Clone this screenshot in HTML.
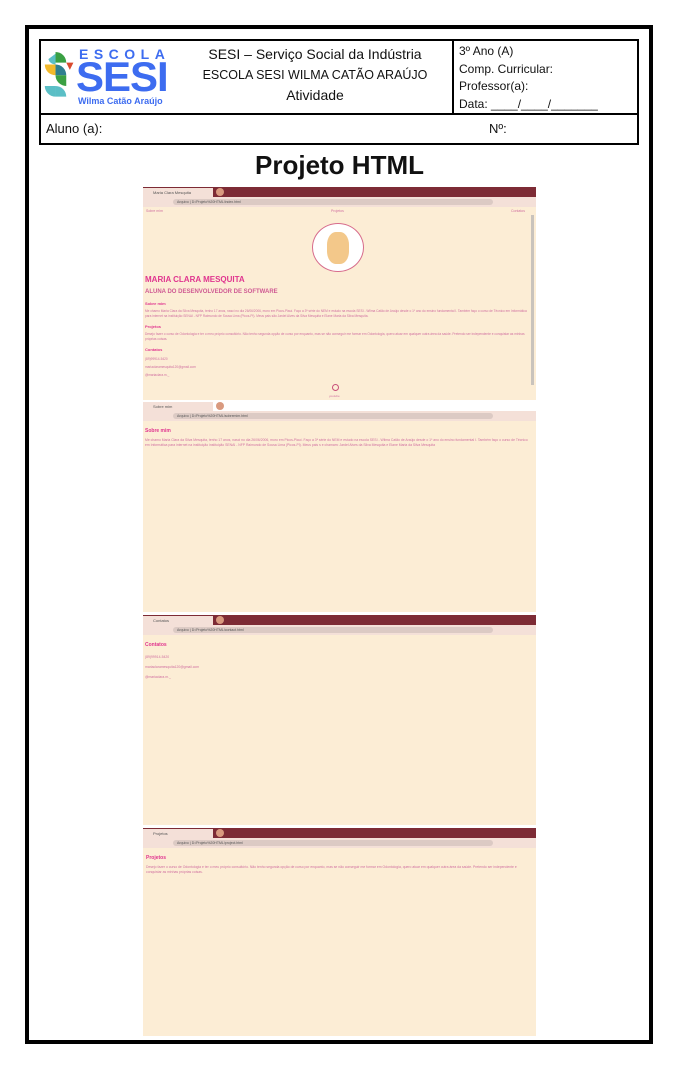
<!DOCTYPE html>
<html><head><meta charset="utf-8"><style>
*{margin:0;padding:0;box-sizing:border-box}
body{width:679px;height:1067px;background:#fff;position:relative;font-family:"Liberation Sans",sans-serif;overflow:hidden}
.abs{position:absolute}
.outer{left:25px;top:25px;width:628px;height:1019px;border:4px solid #000}
.hdr{left:39px;top:39px;width:600px;height:106px;border:2px solid #000}
.f{font-family:"Liberation Sans",sans-serif;color:#111}
.shot{position:absolute;left:143px;width:393px;background:#fcedd5;overflow:hidden}
.tabs{height:10px;background:#7d2b35;position:relative}
.tab{position:absolute;left:0;top:1px;width:70px;height:9px;background:#f4e0d8;font-size:4px;color:#555;padding:2px 0 0 10px}
.url{height:10px;background:#f4e0d8;position:relative}
.urlbox{position:absolute;left:30px;top:2px;width:320px;height:6px;background:#dccac4;border-radius:3px;font-size:3.5px;color:#555;padding:1px 0 0 4px}
.p{color:#d070a0;font-size:4px;line-height:5px}
.h{color:#e0358f;font-weight:bold}
</style></head><body>
<div class="abs outer"></div>
<div class="abs hdr"></div>
<div class="abs" style="left:39px;top:113px;width:600px;height:2px;background:#000"></div>
<div class="abs" style="left:452px;top:39px;width:2px;height:75px;background:#000"></div>
<!-- logo -->
<svg class="abs" style="left:43px;top:47px" width="34" height="60" viewBox="0 0 38 60">
<path d="M14 2 A12 12 0 0 1 26 14 L14 14Z" fill="#3aa043"/>
<path d="M26 14 L34 14 L30 22Z" fill="#d94a2e"/>
<path d="M2 16 L14 16 L14 28 A12 12 0 0 1 2 16Z" fill="#f2b92b"/>
<path d="M14 16 A12 12 0 0 1 26 28 L14 28Z" fill="#2f7f8f"/>
<path d="M14 28 A12 12 0 0 0 26 40 L26 28Z" fill="#3aa043"/>
<path d="M2 40 L14 40 L14 52 A12 12 0 0 1 2 40Z" fill="#5bbfc6"/>
<path d="M14 40 A12 12 0 0 1 26 52 L14 52Z" fill="#5bbfc6"/>
<path d="M14 4 L14 16 A8 8 0 0 1 6 10Z" fill="#5bbfc6"/>
</svg>
<div class="abs" style="left:79px;top:46px;font-size:14px;font-weight:bold;color:#3d6cf0;letter-spacing:5.5px">ESCOLA</div>
<div class="abs" style="left:76px;top:57px;font-size:42px;font-weight:bold;color:#3d6cf0;letter-spacing:-1px;line-height:40px">SESI</div>
<div class="abs" style="left:78px;top:96px;font-size:9px;font-weight:bold;color:#3d6cf0">Wilma Catão Araújo</div>
<div class="abs f" style="left:190px;top:44px;width:250px;text-align:center;font-size:14px;line-height:20px">SESI – Serviço Social da Indústria<br><span style="font-size:12.5px">ESCOLA SESI WILMA CATÃO ARAÚJO</span><br>Atividade</div>
<div class="abs f" style="left:459px;top:43px;font-size:12px;line-height:17.5px">3º Ano (A)<br>Comp. Curricular:<br>Professor(a):<br>Data: ____/____/_______</div>
<div class="abs f" style="left:46px;top:121px;font-size:13px">Aluno (a):</div>
<div class="abs f" style="left:489px;top:121px;font-size:13px">Nº:</div>
<div class="abs" style="left:0;width:679px;top:150px;text-align:center;font-size:26px;font-weight:bold;color:#111">Projeto HTML</div>

<!-- shot 1 -->
<div class="shot" style="top:187px;height:213px">
<div class="tabs"><div class="tab">Maria Clara Mesquita</div><div class="abs" style="left:73px;top:1px;width:8px;height:8px;border-radius:50%;background:#d99a7f"></div></div>
<div class="url"><div class="urlbox">Arquivo | D:/Projeto%20HTML/index.html</div></div>
<div class="p abs" style="left:3px;top:22px;font-size:3.5px">Sobre mim</div><div class="p abs" style="left:188px;top:22px;font-size:3.5px">Projetos</div><div class="p abs" style="left:368px;top:22px;font-size:3.5px">Contatos</div>
<div class="abs" style="left:388px;top:28px;width:3px;height:170px;background:#c9c3bc"></div>
<div class="abs" style="left:169px;top:36px;width:52px;height:49px;border-radius:50%;border:1.5px solid #d76c8c;background:#fff"><div style="margin:8px auto;width:22px;height:32px;background:#f3c88a;border-radius:40%"></div></div>
<div class="abs h" style="left:2px;top:88px;font-size:8px">MARIA CLARA MESQUITA</div>
<div class="abs" style="left:2px;top:102px;font-size:6px;color:#cf5a93;font-weight:bold">ALUNA DO DESENVOLVEDOR DE SOFTWARE</div>
<div class="abs h" style="left:2px;top:114px;font-size:4px">Sobre mim</div>
<div class="abs p" style="left:2px;top:122px;width:384px;font-size:3.2px;line-height:5px">Me chamo Maria Clara da Silva Mesquita, tenho 17 anos, nasci no dia 26/06/2006, moro em Picos-Piauí. Faço a 3ª série do NEM e estudo na escola SESI - Wilma Catão de Araújo desde o 1º ano do ensino fundamental I. Também faço o curso de Técnico em Informática para internet na instituição SENAI - NFP Raimundo de Sousa Lima (Picos-PI). Meus pais são Jardel Alves da Silva Mesquita e Elane Maria da Silva Mesquita.</div>
<div class="abs h" style="left:2px;top:137px;font-size:4px">Projetos</div>
<div class="abs p" style="left:2px;top:145px;width:384px;font-size:3.2px">Desejo fazer o curso de Odontologia e ter o meu próprio consultório. Não tenho segunda opção de curso por enquanto, mas se não conseguir me formar em Odontologia, quero atuar em qualquer outra área da saúde. Pretendo ser independente e conquistar as minhas próprias coisas.</div>
<div class="abs h" style="left:2px;top:160px;font-size:4px">Contatos</div>
<div class="abs p" style="left:2px;top:168px;font-size:3.2px;line-height:8px">(89)99914-5420<br>mariaclaramesquita120@gmail.com<br>@mariaclara.m._</div>
<div class="abs" style="left:189px;top:197px;width:7px;height:7px;border-radius:50%;border:1.5px solid #c8507a"></div>
<div class="abs p" style="left:186px;top:207px;font-size:3px">youtube</div>
</div>

<!-- shot 2 -->
<div class="shot" style="top:401px;height:211px">
<div class="tabs" style="background:#fff"><div class="tab" style="background:#f4e0d8">Sobre mim</div><div class="abs" style="left:73px;top:1px;width:8px;height:8px;border-radius:50%;background:#d99a7f"></div></div>
<div class="url"><div class="urlbox">Arquivo | D:/Projeto%20HTML/sobremim.html</div></div>
<div class="abs h" style="left:2px;top:27px;font-size:5px">Sobre mim</div>
<div class="abs p" style="left:2px;top:37px;width:388px;font-size:3.4px">Me chamo Maria Clara da Silva Mesquita, tenho 17 anos, nasci no dia 26/06/2006, moro em Picos-Piauí. Faço a 3ª série do NEM e estudo na escola SESI - Wilma Catão de Araújo desde o 1º ano do ensino fundamental I. Também faço o curso de Técnico em Informática para internet na instituição instituição SENAI - NFP Raimundo de Sousa Lima (Picos-PI). Meus pais s e chamam: Jardel Alves da Silva Mesquita e Elane Maria da Silva Mesquita</div>
</div>

<!-- shot 3 -->
<div class="shot" style="top:615px;height:210px">
<div class="tabs"><div class="tab">Contatos</div><div class="abs" style="left:73px;top:1px;width:8px;height:8px;border-radius:50%;background:#d99a7f"></div></div>
<div class="url"><div class="urlbox">Arquivo | D:/Projeto%20HTML/contact.html</div></div>
<div class="abs h" style="left:2px;top:27px;font-size:5px">Contatos</div>
<div class="abs p" style="left:2px;top:37px;font-size:3.4px;line-height:10px">(89)99914-5420<br>mariaclaramesquita120@gmail.com<br>@mariaclara.m._</div>
</div>

<!-- shot 4 -->
<div class="shot" style="top:828px;height:208px">
<div class="tabs"><div class="tab">Projetos</div><div class="abs" style="left:73px;top:1px;width:8px;height:8px;border-radius:50%;background:#d99a7f"></div></div>
<div class="url"><div class="urlbox">Arquivo | D:/Projeto%20HTML/project.html</div></div>
<div class="abs h" style="left:3px;top:27px;font-size:5px">Projetos</div>
<div class="abs p" style="left:3px;top:37px;width:386px;font-size:3.4px">Desejo fazer o curso de Odontologia e ter o meu próprio consultório. Não tenho segunda opção de curso por enquanto, mas se não conseguir me formar em Odontologia, quero atuar em qualquer outra área da saúde. Pretendo ser independente e conquistar as minhas próprias coisas.</div>
</div>
</body></html>
